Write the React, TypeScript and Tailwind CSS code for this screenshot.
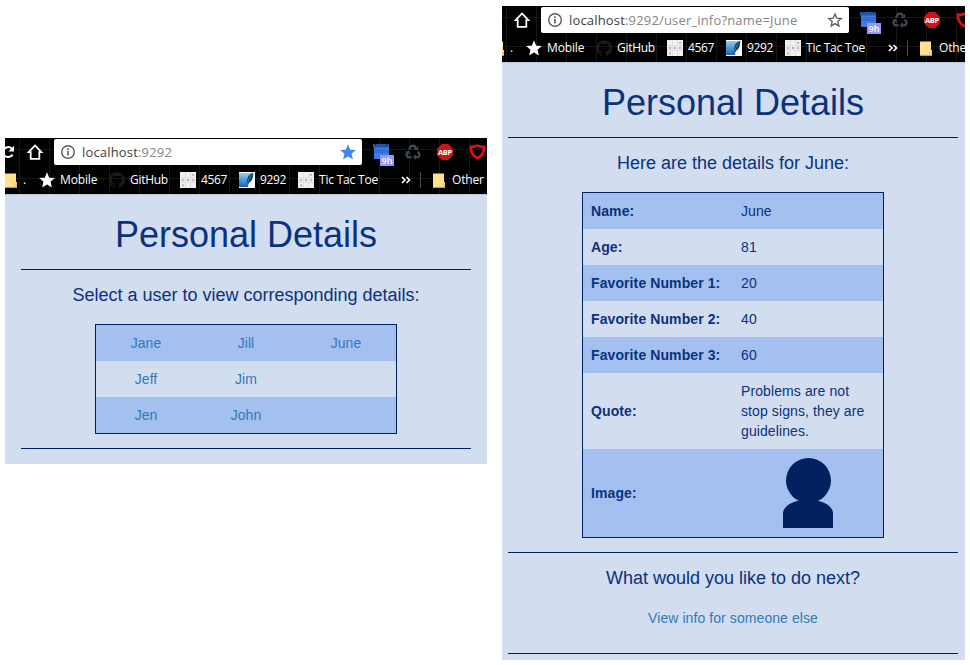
import type { ReactNode } from "react";

const uiFont = "font-['Open_Sans','Noto_Sans',sans-serif]";

function RefreshIcon() {
  return (
    <svg className="h-4 w-[14px] shrink-0" viewBox="0 0 14 16" fill="none">
      <path d="M7.6 10.6A5.2 5.2 0 0 1-2 8 5.2 5.2 0 0 1 6.8 4.6" stroke="#fff" strokeWidth="2" />
      <path d="M9 1.8V7.4H3.4z" fill="#fff" />
    </svg>
  );
}

function HomeIcon() {
  return (
    <svg className="h-4 w-4 shrink-0" viewBox="0 0 16 16" fill="none">
      <path d="M8 1.5 1.6 8.2H3.7V14.8H12.3V8.2H14.4Z" stroke="#fff" strokeWidth="1.8" />
    </svg>
  );
}

function InfoIcon() {
  return (
    <svg className="h-4 w-4 shrink-0" viewBox="0 0 16 16" fill="none">
      <circle cx="8" cy="8" r="6.3" stroke="#5a5a5a" strokeWidth="1.4" />
      <path d="M8 7v4.6M8 4.3v1.6" stroke="#5a5a5a" strokeWidth="1.6" />
    </svg>
  );
}

function Star({ fill, stroke }: { fill: string; stroke: string }) {
  return (
    <svg className="h-4 w-4 shrink-0" viewBox="0 0 16 16">
      <path
        d="M8 2 9.7 6.2 14.2 6.6 10.8 9.5 11.9 14 8 11.6 4.1 14 5.2 9.5 1.8 6.6 6.3 6.2Z"
        fill={fill}
        stroke={stroke}
        strokeWidth="1.3"
      />
    </svg>
  );
}

function CalendarIcon() {
  return (
    <div className="relative mt-[6px] h-[22px] w-6 shrink-0">
      <svg className="h-4 w-4" viewBox="0 0 16 16">
        <path d="M1 3H16V15H1Z" fill="#3f7ae6" />
        <path d="M1 5H16V9H1Z" fill="#386cd2" />
        <path d="M0 0H16V3.5H0Z" fill="#2454a8" />
        <path d="M2.5 0V1.5M13.5 0V1.5" stroke="#0b2450" />
      </svg>
      <span
        className={`absolute left-[7px] top-[11px] h-[11px] w-[14px] bg-[#9696fa] text-center text-[9px] leading-[11px] font-semibold text-white ${uiFont}`}
      >
        9h
      </span>
    </div>
  );
}

function RecycleIcon() {
  return (
    <svg className="h-4 w-4 shrink-0" viewBox="0 0 16 16" fill="none" stroke="#434d58" strokeWidth="2.1">
      <path d="M4 5.6 6 1.9H9.6L11.2 4.7" />
      <path d="M12.8 7.4 14.7 10.8 13.3 13.2H10" />
      <path d="M6.6 13.2H2.8L1.4 10.8 2.8 8.3" />
      <path d="M9.2 5.4h3.3V2.4M10.8 10.8 8.6 13.2l2.2 2.2M.7 8.3l2.9-.8.9 2.8" strokeWidth="1.2" />
    </svg>
  );
}

function AbpIcon() {
  return (
    <div className="relative h-4 w-4 shrink-0">
      <svg className="h-4 w-4" viewBox="0 0 16 16">
        <path d="M4.8 0H11.2L16 4.8V11.2L11.2 16H4.8L0 11.2V4.8Z" fill="#cf1118" />
      </svg>
      <span className="absolute inset-0 text-center font-['Open_Sans',sans-serif] text-[7.5px] leading-4 font-bold tracking-[-0.3px] text-white">
        ABP
      </span>
    </div>
  );
}

function ShieldIcon() {
  return (
    <svg className="h-4 w-[17px] shrink-0" viewBox="0 0 17 16" fill="none">
      <path
        d="M8.5 1.7C6.6 2.7 4.2 3 1.8 2.8 1.8 8.2 3.8 12 8.5 14.4 13.2 12 15.2 8.2 15.2 2.8 12.8 3 10.4 2.7 8.5 1.7Z"
        stroke="#e30c20"
        strokeWidth="2.6"
      />
    </svg>
  );
}

function Folder() {
  return (
    <svg className="h-[15px] w-3 shrink-0" viewBox="0 0 12 15">
      <path d="M0 .5H11V9H12V14.5H0Z" fill="#ffe28c" />
      <path d="M9.5 13.5V10.8H11.5V13.5Z" stroke="#e5bd52" strokeWidth=".8" fill="none" />
      <path d="M0 14H12" stroke="#f3cf72" />
    </svg>
  );
}

function GithubMark() {
  return (
    <svg className="h-4 w-4 shrink-0" viewBox="0 0 24 24" fill="#1b1b1b">
      <path d="M12 .3a12 12 0 0 0-3.8 23.4c.6.1.8-.3.8-.6v-2c-3.3.7-4-1.6-4-1.6-.6-1.4-1.4-1.8-1.4-1.8-1-.7.1-.7.1-.7 1.2 0 1.9 1.2 1.9 1.2 1 1.8 2.8 1.3 3.5 1 0-.8.4-1.3.7-1.6-2.7-.3-5.5-1.3-5.5-6 0-1.2.5-2.3 1.3-3.1-.2-.4-.6-1.6 0-3.2 0 0 1-.3 3.4 1.2a11.5 11.5 0 0 1 6 0c2.3-1.5 3.3-1.2 3.3-1.2.6 1.6.2 2.8 0 3.2.9.8 1.3 1.9 1.3 3.2 0 4.6-2.8 5.6-5.5 5.9.5.4.9 1 .9 2.2v3.3c0 .3.1.7.8.6A12 12 0 0 0 12 .3Z" />
    </svg>
  );
}

function BoardIcon() {
  return (
    <svg className="h-4 w-4 shrink-0" viewBox="0 0 16 16" fill="none">
      <path d="M0 0H16V16H0Z" fill="#f1f1f1" />
      <path d="M5.5 0V16M10.5 0V16M0 5.5H16M0 10.5H16" stroke="#dcdcdc" strokeWidth=".8" />
      <path d="m12.3 2 1.6 1.6m0-1.6-1.6 1.6M7.2 7.2l1.6 1.6m0-1.6L7.2 8.8M2.2 12.6l1.6 1.6m0-1.6-1.6 1.6" stroke="#777" strokeWidth=".7" />
      <circle cx="3" cy="8" r="1" stroke="#999" strokeWidth=".6" />
      <circle cx="13" cy="8" r="1" stroke="#999" strokeWidth=".6" />
    </svg>
  );
}

function FeatherIcon() {
  return (
    <svg className="h-4 w-4 shrink-0" viewBox="0 0 16 16">
      <defs>
        <linearGradient id="sky" x1="0" y1="0" x2="0" y2="1">
          <stop offset="0" stopColor="#8fd0ee" />
          <stop offset="1" stopColor="#1565b5" />
        </linearGradient>
      </defs>
      <path d="M0 0H16V16H0Z" fill="#fff" />
      <path d="M0 1H11L9 15H0Z" fill="url(#sky)" />
      <path d="M14.2.8C10 1.5 7.6 5 7.8 14.5 9 11.4 10.4 10.4 11.8 9.4 13.8 7 14.6 4 14.2.8Z" fill="#123f63" />
      <path d="M13.3 2C10.8 5 9.3 8 8.3 13" stroke="#3d8ec0" strokeWidth=".9" fill="none" />
    </svg>
  );
}

function BookmarkText({ className, children }: { className: string; children: ReactNode }) {
  return <span className={`shrink-0 whitespace-nowrap ${className}`}>{children}</span>;
}

function BrowserChrome({ path, starred, folderName }: { path: string; starred: boolean; folderName: string }) {
  return (
    <header
      className={`h-14 bg-black bg-[linear-gradient(to_right,#171717_1px,transparent_1px),linear-gradient(to_bottom,#171717_1px,transparent_1px)] bg-[size:30px_29px] bg-[position:14px_11px] ${uiFont}`}
    >
      <div className="flex h-7 items-center">
        <RefreshIcon />
        <div className="ml-2 flex">
          <HomeIcon />
        </div>
        <div className="ml-[11px] flex h-[26px] w-[308px] shrink-0 items-center rounded-xs bg-white pr-[6px] pl-[6px]">
          <InfoIcon />
          <span className="ml-[6px] grow text-[13px] leading-5 tracking-[0.17px] whitespace-nowrap text-[#858585]">
            <span className="text-[#404040]">localhost</span>
            {path}
          </span>
          <Star fill={starred ? "#4285f4" : "none"} stroke={starred ? "#4285f4" : "#5a5a5a"} />
        </div>
        <div className="ml-[11px] flex items-center">
          <CalendarIcon />
        </div>
        <div className="ml-2 flex items-center gap-4">
          <RecycleIcon />
          <AbpIcon />
          <ShieldIcon />
        </div>
      </div>
      <div className="flex h-7 items-center text-[12px] leading-4 text-white">
        <Folder />
        <BookmarkText className="ml-[6px] w-[15px]">.</BookmarkText>
        <div className="ml-[1px] flex">
          <Star fill="#fff" stroke="#fff" />
        </div>
        <BookmarkText className="ml-[5px] w-[49px] tracking-[-0.15px]">Mobile</BookmarkText>
        <GithubMark />
        <BookmarkText className="ml-[5px] w-[50px] tracking-[-0.3px]">GitHub</BookmarkText>
        <BoardIcon />
        <BookmarkText className="ml-[5px] w-[38px] tracking-[-0.4px]">4567</BookmarkText>
        <FeatherIcon />
        <BookmarkText className="ml-[5px] w-[38px] tracking-[-0.4px]">9292</BookmarkText>
        <BoardIcon />
        <BookmarkText className="ml-[5px] w-[82px] tracking-[-0.2px]">Tic Tac Toe</BookmarkText>
        <svg className="h-2 w-[10px] shrink-0" viewBox="0 0 10 8" fill="none">
          <path d="m1 1 3 3-3 3M5.5 1l3 3-3 3" stroke="#fff" strokeWidth="1.6" />
        </svg>
        <div className="ml-[9px] h-4 w-px shrink-0 bg-[#4a4a4a]" />
        <div className="ml-3 flex">
          <Folder />
        </div>
        <BookmarkText className="ml-[7px] tracking-[-0.15px]">{folderName}</BookmarkText>
      </div>
    </header>
  );
}

function Rule({ className }: { className: string }) {
  return <div className={`h-px w-[450px] bg-[#00205f] ${className}`} />;
}

function PageTitle() {
  return <h1 className="mt-5 h-10 text-[36px] leading-10">Personal Details</h1>;
}

const names = [
  ["Jane", "Jill", "June"],
  ["Jeff", "Jim", ""],
  ["Jen", "John", ""],
];

const details = [
  ["Name:", "June"],
  ["Age:", "81"],
  ["Favorite Number 1:", "20"],
  ["Favorite Number 2:", "40"],
  ["Favorite Number 3:", "60"],
  ["Quote:", "Problems are not stop signs, they are guidelines."],
];

function Avatar() {
  return (
    <svg className="h-[72px] w-[52px]" viewBox="0 0 52 72" fill="#00205f">
      <circle cx="26.5" cy="23.5" r="22.5" />
      <path d="M1 71V57C1 50 8 45.5 17 43.5H35C44 45.5 51 50 51 57V71Z" />
    </svg>
  );
}

export default function App() {
  return (
    <main className="flex h-[665px] w-[970px] items-start overflow-hidden bg-white pl-[5px] font-['Liberation_Sans',Arial,sans-serif] text-[#0a327d]">
      <section className="mt-[138px] h-[326px] w-[482px] shrink-0 overflow-hidden bg-[#d2ddef]">
        <div className="w-[482px] overflow-hidden">
          <BrowserChrome path=":9292" starred folderName="Other" />
        </div>
        <div className="flex flex-col items-center border-t border-[#bfc9dc]">
          <PageTitle />
          <Rule className="mt-[14px]" />
          <h2 className="mt-[15px] text-[18px] leading-5">Select a user to view corresponding details:</h2>
          <div className="mt-[19px] w-[302px] border border-[#00205f]">
            {names.map((row) => (
              <div key={row[0]} className="grid h-9 grid-cols-3 items-center text-center text-sm text-[#337ab7] odd:bg-[#a4c0f0]">
                {row.map((name, i) => (
                  <a key={i}>{name}</a>
                ))}
              </div>
            ))}
          </div>
          <Rule className="mt-[14px]" />
        </div>
      </section>

      <section className="mt-[6px] ml-[15px] h-[654px] w-[463px] shrink-0 overflow-hidden bg-[#d2ddef]">
        <div className="-ml-[10px] w-[482px]">
          <BrowserChrome path=":9292/user_info?name=June" starred={false} folderName="Othe" />
          <div className="flex flex-col items-center border-t border-[#bfc9dc]">
            <PageTitle />
            <Rule className="mt-[14px]" />
            <h2 className="mt-[15px] text-[18px] leading-5">Here are the details for June:</h2>
            <div className="mt-[19px] w-[302px] border border-[#00205f] text-sm leading-5 tracking-[0.1px]">
              {details.map(([label, value]) => (
                <div key={label} className="grid grid-cols-2 items-center odd:bg-[#a4c0f0]">
                  <div className="p-2 pr-0 font-bold whitespace-nowrap">{label}</div>
                  <div className="p-2">{value}</div>
                </div>
              ))}
              <div className="grid grid-cols-2 items-center bg-[#a4c0f0]">
                <div className="p-2 font-bold">Image:</div>
                <div className="flex justify-center p-2">
                  <Avatar />
                </div>
              </div>
            </div>
            <Rule className="mt-[14px]" />
            <h2 className="mt-[15px] text-[18px] leading-5">What would you like to do next?</h2>
            <a className="mt-5 text-sm leading-5 tracking-[0.08px] text-[#337ab7]">View info for someone else</a>
            <Rule className="mt-[25px]" />
          </div>
        </div>
      </section>
    </main>
  );
}
